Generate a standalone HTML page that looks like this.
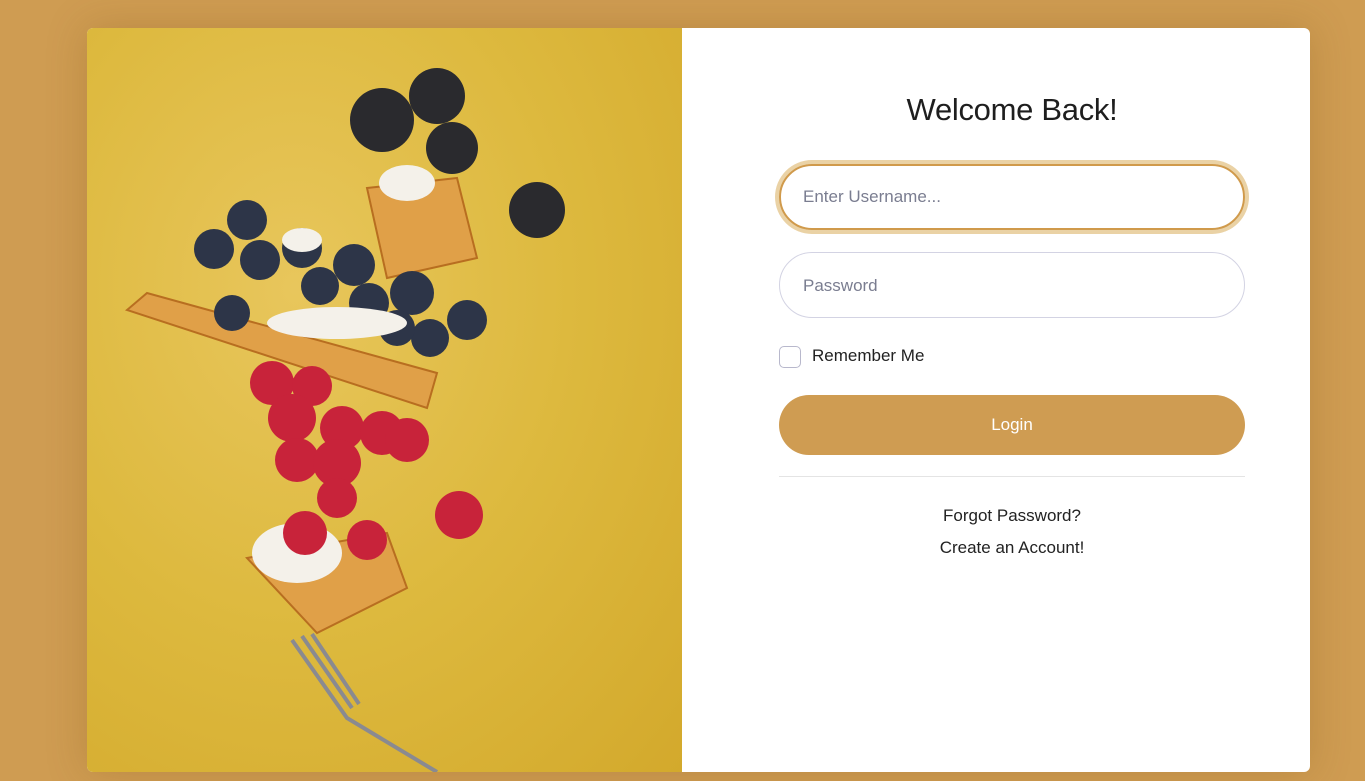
<!DOCTYPE html>
<html><head><meta charset="utf-8"><style>
html,body{margin:0;padding:0}
body{width:1365px;height:781px;background:#cf9c52;font-family:"Liberation Sans",sans-serif;position:relative;overflow:hidden}
.card{position:absolute;left:87px;top:28px;width:1223px;height:744px;background:#fff;border-radius:6px;overflow:hidden;box-shadow:0 0 40px rgba(120,80,20,.25)}
.img{position:absolute;left:0;top:0;width:595px;height:744px;background:radial-gradient(ellipse at 35% 35%,#e8c65c 0%,#ddb93e 50%,#d3a92c 100%)}
h1{position:absolute;left:692px;width:466px;top:64px;margin:0;text-align:center;font-weight:normal;font-size:31px;color:#1e1e1e;letter-spacing:-0.3px}
.in{position:absolute;left:692px;width:466px;height:64px;border:1px solid #d3d3e3;border-radius:33px;box-sizing:border-box;font-size:17px;color:#7a7d90;padding-left:23px;line-height:64px}
.u{top:136px;border:2px solid #d09a4b;box-shadow:0 0 0 4px #ead2a5;height:66px;line-height:62px;padding-left:22px}
.p{top:224px;height:66px;line-height:66px}
.cb{position:absolute;left:692px;top:318px;width:20px;height:20px;border:1px solid #b8b8cc;border-radius:5px}
.rm{position:absolute;left:725px;top:318px;font-size:17px;color:#222;line-height:20px}
.btn{position:absolute;left:692px;top:367px;width:466px;height:60px;border-radius:30px;background:#cf9c52;color:#fff;text-align:center;line-height:60px;font-size:17px}
.hr{position:absolute;left:692px;top:448px;width:466px;height:1px;background:#e4e4e4}
.lk{position:absolute;left:692px;width:466px;text-align:center;font-size:17px;color:#222}
</style></head><body>
<div class="card">
<div class="img">
<svg width="595" height="744" viewBox="0 0 595 744">
<g fill="#e0a048" stroke="#b86e20" stroke-width="2">
<polygon points="40,282 60,265 350,345 340,380"/>
<polygon points="280,160 370,150 390,230 300,250"/>
<polygon points="160,530 300,505 320,560 230,605"/>
</g>
<g fill="#2a2a2e">
<circle cx="295" cy="92" r="32"/><circle cx="350" cy="68" r="28"/><circle cx="365" cy="120" r="26"/><circle cx="450" cy="182" r="28"/>
</g>
<g fill="#2d3548">
<circle cx="127" cy="221" r="20"/><circle cx="173" cy="232" r="20"/><circle cx="215" cy="220" r="20"/><circle cx="267" cy="237" r="21"/><circle cx="233" cy="258" r="19"/><circle cx="325" cy="265" r="22"/><circle cx="282" cy="275" r="20"/><circle cx="380" cy="292" r="20"/><circle cx="343" cy="310" r="19"/><circle cx="145" cy="285" r="18"/><circle cx="310" cy="300" r="18"/><circle cx="160" cy="192" r="20"/>
</g>
<g fill="#f4f1ea">
<ellipse cx="320" cy="155" rx="28" ry="18"/><ellipse cx="250" cy="295" rx="70" ry="16"/><ellipse cx="215" cy="212" rx="20" ry="12"/><ellipse cx="210" cy="525" rx="45" ry="30"/>
</g>
<g fill="#c8233a">
<circle cx="185" cy="355" r="22"/><circle cx="225" cy="358" r="20"/><circle cx="205" cy="390" r="24"/><circle cx="255" cy="400" r="22"/><circle cx="295" cy="405" r="22"/><circle cx="210" cy="432" r="22"/><circle cx="250" cy="435" r="24"/><circle cx="320" cy="412" r="22"/><circle cx="250" cy="470" r="20"/><circle cx="372" cy="487" r="24"/><circle cx="218" cy="505" r="22"/><circle cx="280" cy="512" r="20"/>
</g>
<g stroke="#8a8a90" stroke-width="4" fill="none">
<path d="M205,612 L260,690 L350,744"/><path d="M215,608 L265,680"/><path d="M225,606 L272,676"/>
</g>
</svg>
</div>
<h1>Welcome Back!</h1>
<div class="in u">Enter Username...</div>
<div class="in p">Password</div>
<div class="cb"></div><div class="rm">Remember Me</div>
<div class="btn">Login</div>
<div class="hr"></div>
<div class="lk" style="top:478px">Forgot Password?</div>
<div class="lk" style="top:510px">Create an Account!</div>
</div>
</body></html>
